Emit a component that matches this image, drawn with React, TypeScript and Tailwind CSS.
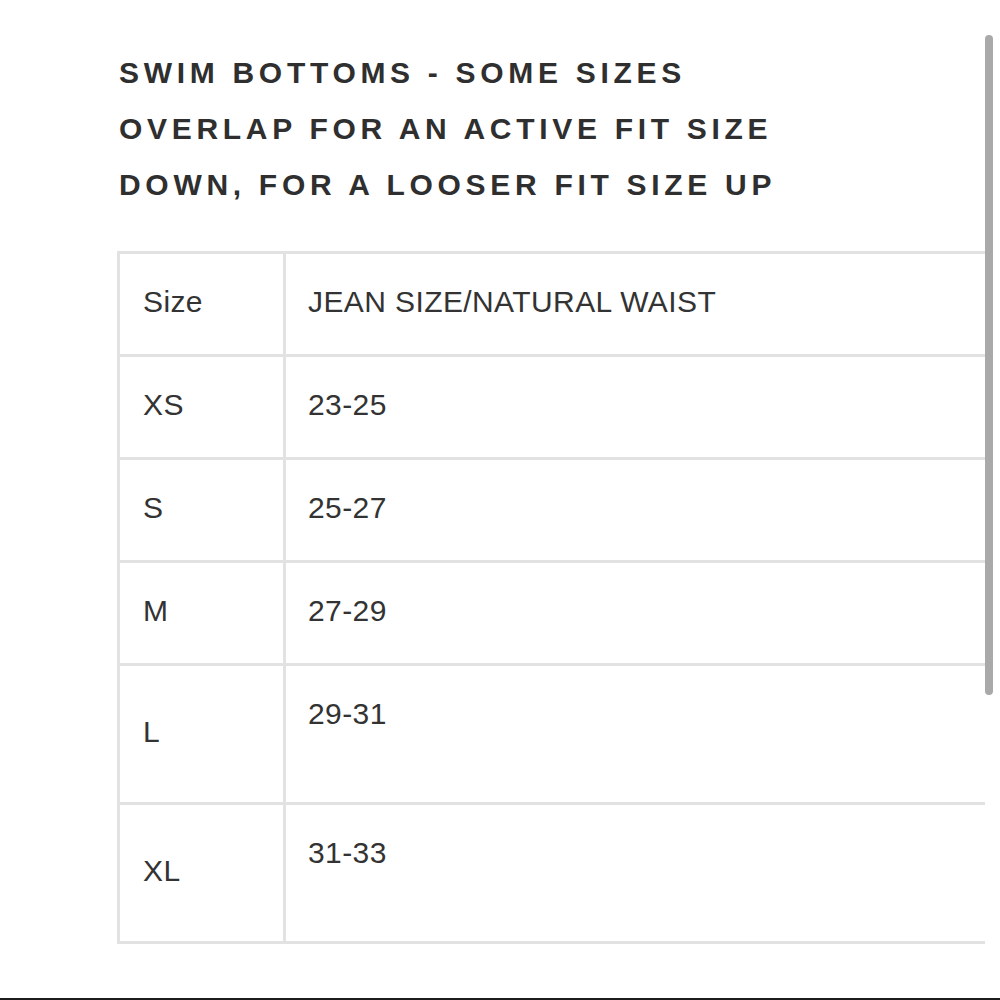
const rows = [
  { size: "XS", range: "23-25", tall: false },
  { size: "S", range: "25-27", tall: false },
  { size: "M", range: "27-29", tall: false },
  { size: "L", range: "29-31", tall: true },
  { size: "XL", range: "31-33", tall: true },
];

const App = () => {
  return (
    <div className="relative flex h-[1000px] w-[1000px] flex-col overflow-hidden bg-white font-['Liberation_Sans',Arial,sans-serif] text-[#333333]">
      {/* Heading */}
      <h2 className="pl-[119px] pt-[45px] text-[30px] font-bold uppercase leading-[56px] tracking-[4.7px] text-[#2f2f2f]">
        <span className="block whitespace-nowrap">Swim bottoms - some sizes</span>
        <span className="block whitespace-nowrap">overlap for an active fit size</span>
        <span className="block whitespace-nowrap">down, for a looser fit size up</span>
      </h2>

      {/* Size table */}
      <div className="ml-[117px] mt-[38px] w-[868px] border-l-[3px] border-t-[3px] border-[#e2e2e2] text-[30px] leading-[36px] tracking-[0.4px]">
        <div className="flex border-b-[3px] border-[#e2e2e2]">
          <div className="flex w-[166px] items-center border-r-[3px] border-[#e2e2e2] pb-[34px] pl-[23px] pt-[30px]">Size</div>
          <div className="flex-1 pb-[34px] pl-[22px] pt-[30px]">JEAN SIZE/NATURAL WAIST</div>
        </div>
        {rows.map((r) => (
          <div key={r.size} className="flex border-b-[3px] border-[#e2e2e2]">
            <div className="flex w-[166px] items-center border-r-[3px] border-[#e2e2e2] pb-[34px] pl-[23px] pt-[30px]">{r.size}</div>
            <div className="flex flex-1 flex-col justify-center pb-[34px] pl-[22px] pt-[30px]">
              <span>{r.range}</span>
              {r.tall && <span>&nbsp;</span>}
            </div>
          </div>
        ))}
      </div>

      <div className="flex-1" />
      <div className="h-[2px] w-full bg-[#1c1c1c]" />

      {/* overlay scrollbar */}
      <div className="absolute left-[985px] top-[35px] h-[660px] w-[8px] rounded-full bg-[#a9a9a9]" />
    </div>
  );
};

export default App;
